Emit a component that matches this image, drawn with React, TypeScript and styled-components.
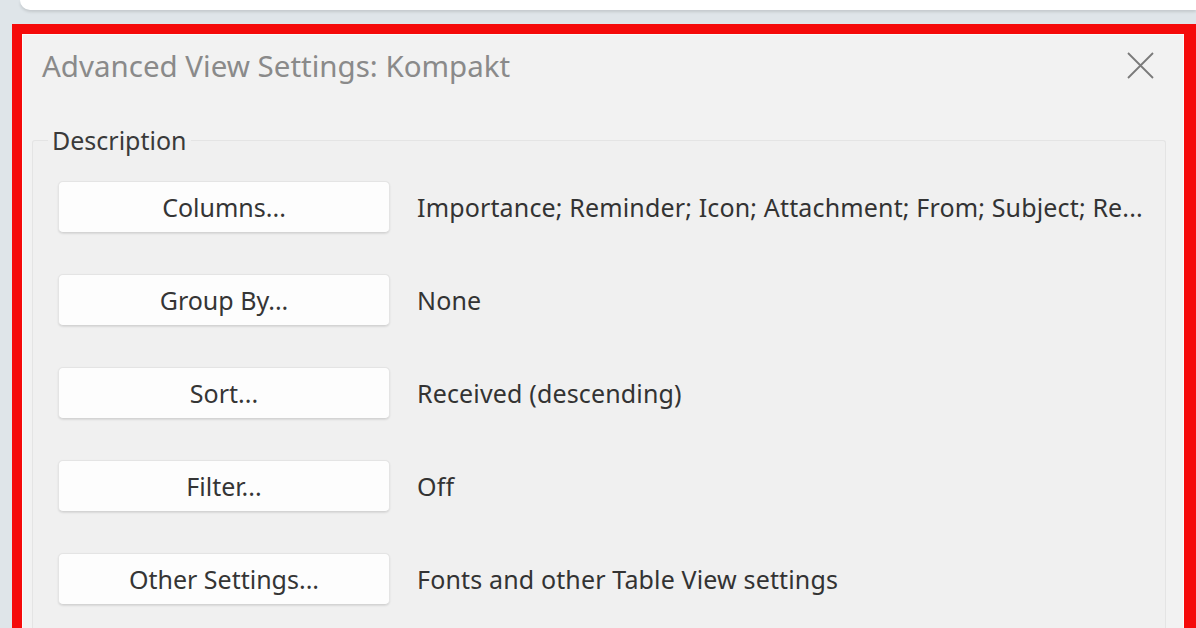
import styled, { createGlobalStyle } from "styled-components";

const Global = createGlobalStyle`
  html, body {
    margin: 0;
    padding: 0;
    background: #dfe5e9;
  }
  body {
    font-family: "Noto Sans", "Open Sans", Arial, sans-serif;
  }
`;

// Page canvas
const Page = styled.div`
  width: 1196px;
  height: 628px;
  overflow: hidden;
  display: flex;
  flex-direction: column;
`;

// White strip of the window above, cut off at the top
const TopStrip = styled.div`
  height: 10px;
  margin-left: 20px;
  background: #ffffff;
  border-bottom-left-radius: 10px;
  box-shadow: 0 2px 3px rgba(0, 0, 0, 0.12);
  flex-shrink: 0;
`;

// Red highlight frame round the dialog (runs past the bottom of the shot)
const Highlight = styled.div`
  margin-top: 14px;
  margin-left: 12px;
  height: 700px;
  flex-shrink: 0;
  border-top: 10px solid #f50a0a;
  border-left: 10px solid #f50a0a;
  border-right: 12px solid #f50a0a;
  display: flex;
  flex-direction: column;
`;

const Dialog = styled.div`
  flex: 1;
  background: #f2f2f2;
  border: 1px solid #fbfbfb;
  border-bottom: none;
  display: flex;
  flex-direction: column;
`;

const TitleBar = styled.div`
  height: 64px;
  flex-shrink: 0;
  display: flex;
  align-items: center;
  justify-content: space-between;
  padding: 0 29px 0 19px;
`;

const Title = styled.div`
  font-size: 29.5px;
  color: #8a8a8a;
  margin-top: -3px;
`;

const CloseButton = styled.button`
  background: none;
  border: none;
  padding: 0;
  width: 28px;
  height: 28px;
  margin-top: -4px;
  display: flex;
  align-items: center;
  justify-content: center;
  cursor: pointer;
`;

// Group box with its legend
const GroupBox = styled.fieldset`
  flex: 1;
  margin: 24px 17px 0 9px;
  border: 1px solid #e4e4e4;
  border-bottom: none;
  border-radius: 3px 3px 0 0;
  background: #f0f0f0;
  padding: 0;
  min-width: 0;
`;

const Legend = styled.legend`
  font-size: 25px;
  line-height: 34px;
  color: #3a3a3a;
  padding: 0 4px;
  margin-left: 15px;
`;

const Rows = styled.div`
  display: flex;
  flex-direction: column;
  gap: 41px;
  padding: 24px 0 0 25px;
`;

const Row = styled.div`
  display: flex;
  align-items: center;
  gap: 27px;
`;

const ActionButton = styled.button`
  width: 332px;
  height: 52px;
  flex-shrink: 0;
  background: #fdfdfd;
  border: 1px solid #e4e4e4;
  border-bottom-color: #d4d4d4;
  border-radius: 5px;
  box-shadow: 0 1px 2px rgba(0, 0, 0, 0.1);
  font-family: inherit;
  font-size: 25px;
  color: #353535;
  padding: 0;
  cursor: pointer;
`;

const Value = styled.span`
  font-size: 25px;
  letter-spacing: 0.15px;
  color: #333333;
  white-space: nowrap;
`;

const rows = [
  { label: "Columns...", value: "Importance; Reminder; Icon; Attachment; From; Subject; Re..." },
  { label: "Group By...", value: "None" },
  { label: "Sort...", value: "Received (descending)" },
  { label: "Filter...", value: "Off" },
  { label: "Other Settings...", value: "Fonts and other Table View settings" },
];

export default function App() {
  return (
    <>
      <Global />
      <Page>
        <TopStrip />
        <Highlight>
          <Dialog>
            <TitleBar>
              <Title>Advanced View Settings: Kompakt</Title>
              <CloseButton aria-label="Close">
                <svg width="27" height="27" viewBox="0 0 27 27">
                  <path
                    d="M1 1 L26 26 M26 1 L1 26"
                    stroke="#7a7a7a"
                    strokeWidth="1.8"
                    fill="none"
                  />
                </svg>
              </CloseButton>
            </TitleBar>
            <GroupBox>
              <Legend>Description</Legend>
              <Rows>
                {rows.map((r) => (
                  <Row key={r.label}>
                    <ActionButton>{r.label}</ActionButton>
                    <Value>{r.value}</Value>
                  </Row>
                ))}
              </Rows>
            </GroupBox>
          </Dialog>
        </Highlight>
      </Page>
    </>
  );
}
